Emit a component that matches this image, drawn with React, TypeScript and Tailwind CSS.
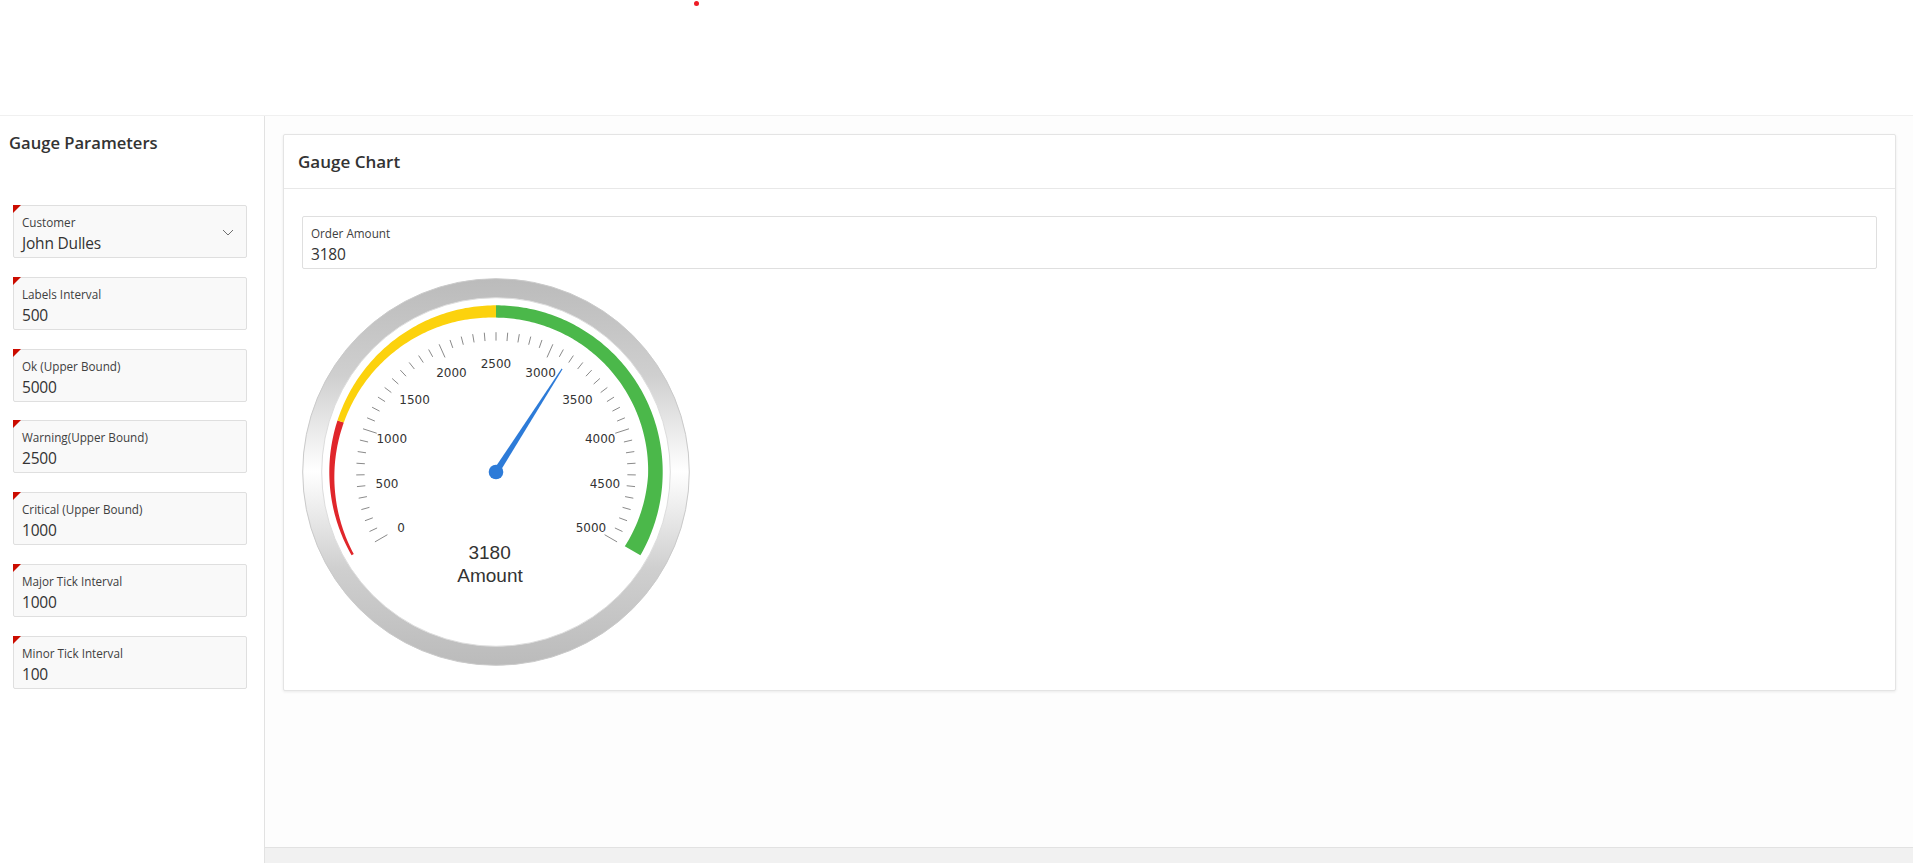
import React from "react";

const CX = 195;
const CY = 195;
const MAX = 5000;

const angle = (value: number) => ((210 - (value / MAX) * 240) * Math.PI) / 180;

const pt = (value: number, r: number) => {
  const a = angle(value);
  return [CX + r * Math.cos(a), CY - r * Math.sin(a)];
};

// range band gets wider along the scale
const bandWidth = (value: number) => {
  const stops = [
    [0, 2.5],
    [1000, 6.7],
    [2500, 12.3],
    [4400, 14.6],
    [5000, 18],
  ];
  for (let i = 1; i < stops.length; i++) {
    if (value <= stops[i][0]) {
      const t = (value - stops[i - 1][0]) / (stops[i][0] - stops[i - 1][0]);
      return stops[i - 1][1] + t * (stops[i][1] - stops[i - 1][1]);
    }
  }
  return 18;
};

const bandPath = (from: number, to: number) => {
  const outer: string[] = [];
  const inner: string[] = [];
  const R = 166.7;
  for (let v = from; v <= to; v += 20) {
    const o = pt(v, R);
    const i = pt(v, R - bandWidth(v));
    outer.push(`${o[0].toFixed(2)} ${o[1].toFixed(2)}`);
    inner.unshift(`${i[0].toFixed(2)} ${i[1].toFixed(2)}`);
  }
  return `M${outer.join("L")}L${inner.join("L")}Z`;
};

const ticks = Array.from({ length: 51 }, (_, i) => i * 100);
const labels = Array.from({ length: 11 }, (_, i) => i * 500);

const Gauge = ({ value }: { value: number }) => {
  const tip = pt(value, 122.5);
  const a = angle(value);
  const nx = Math.sin(a);
  const ny = Math.cos(a);
  const hw = 3.2;
  const tw = 0.55;
  return (
    <svg width="390" height="390" viewBox="0 0 390 390" className="block">
      <defs>
        <linearGradient id="ring" x1="0" y1="0" x2="0" y2="1">
          <stop offset="0" stopColor="#bbbbbb" />
          <stop offset="0.25" stopColor="#cfcfcf" />
          <stop offset="0.5" stopColor="#ffffff" />
          <stop offset="0.75" stopColor="#cfcfcf" />
          <stop offset="1" stopColor="#bbbbbb" />
        </linearGradient>
      </defs>
      <circle cx={CX} cy={CY} r="193.3" fill="url(#ring)" stroke="#cacaca" strokeWidth="1" />
      <circle cx={CX} cy={CY} r="174.3" fill="#ffffff" stroke="#dddddd" strokeWidth="1" />
      <path d={bandPath(0, 1000)} fill="#e0262b" />
      <path d={bandPath(1000, 2500)} fill="#fcd20d" />
      <path d={bandPath(2500, 5000)} fill="#4bb84a" />
      {ticks.map((t) => {
        const major = t % 1000 === 0;
        const p1 = pt(t, 139.8);
        const p2 = pt(t, major ? 125.4 : 131.4);
        return (
          <line
            key={t}
            x1={p1[0]}
            y1={p1[1]}
            x2={p2[0]}
            y2={p2[1]}
            stroke="#8a8a8a"
            strokeWidth="1"
          />
        );
      })}
      {labels.map((l) => {
        const p = pt(l, 109.6);
        return (
          <text
            key={l}
            x={p[0]}
            y={p[1] + 5 + 0.6 * Math.sin(angle(l))}
            textAnchor="middle"
            fill="#333333"
            className="font-['DejaVu_Sans'] text-[12px]"
          >
            {l}
          </text>
        );
      })}
      <path
        d={`M${CX + nx * hw} ${CY + ny * hw}L${tip[0] + nx * tw} ${tip[1] + ny * tw}L${tip[0] - nx * tw} ${tip[1] - ny * tw}L${CX - nx * hw} ${CY - ny * hw}Z`}
        fill="#2d7bd8"
      />
      <circle cx={CX} cy={CY} r="7.3" fill="#2d7bd8" />
      <text
        x={CX - 6.4}
        y={CY + 87.3}
        textAnchor="middle"
        fill="#333333"
        className="font-['Liberation_Sans'] text-[19px]"
      >
        {value}
      </text>
      <text
        x={CX - 6}
        y={CY + 110.3}
        textAnchor="middle"
        fill="#333333"
        className="font-['Liberation_Sans'] text-[19px]"
      >
        Amount
      </text>
    </svg>
  );
};

const Field = ({
  label,
  value,
  required,
  select,
  bg,
}: {
  label: string;
  value: string;
  required?: boolean;
  select?: boolean;
  bg: string;
}) => (
  <div className={`relative h-[53px] border border-[#dfdfdf] rounded-[2px] pl-[8px] pt-[8px] ${bg}`}>
    {required && (
      <span className="absolute left-[-1px] top-[-1px] w-0 h-0 border-t-[8px] border-r-[8px] border-t-[#cb0c00] border-r-transparent" />
    )}
    <div className="text-[11.7px] leading-[16px] text-[#404040]">{label}</div>
    <div className="text-[15.5px] leading-[20px] mt-[3px] tracking-[-0.2px] text-[#333333]">{value}</div>
    {select && (
      <svg
        width="12"
        height="8"
        viewBox="0 0 12 8"
        className="absolute right-[12px] top-[23px]"
        fill="none"
        stroke="#707070"
        strokeWidth="1"
      >
        <path d="M1 1l5 5 5-5" />
      </svg>
    )}
  </div>
);

const params = [
  { label: "Customer", value: "John Dulles", select: true },
  { label: "Labels Interval", value: "500" },
  { label: "Ok (Upper Bound)", value: "5000" },
  { label: "Warning(Upper Bound)", value: "2500" },
  { label: "Critical (Upper Bound)", value: "1000" },
  { label: "Major Tick Interval", value: "1000" },
  { label: "Minor Tick Interval", value: "100" },
];

const App = () => {
  return (
    <div className="h-[863px] flex flex-col bg-white overflow-hidden font-['Open_Sans',sans-serif]">
      <header className="h-[116px] shrink-0 pl-[694px] pt-[1px] border-b border-[#f0f0f0] shadow-[0_1px_3px_rgba(0,0,0,0.04)]">
        <div className="w-[5px] h-[5px] rounded-full bg-[#ee1c25]" />
      </header>
      <div className="flex flex-1 min-h-0">
        <aside className="w-[265px] shrink-0 border-r border-[#e2e2e2] bg-white">
          <h2 className="pl-[9px] pt-[15px] text-[16.6px] leading-[24px] font-semibold text-[#333333]">
            Gauge Parameters
          </h2>
          <div className="flex flex-col gap-[18.83px] pl-[13px] pr-[17px] mt-[50px]">
            {params.map((p) => (
              <Field key={p.label} {...p} required bg="bg-[#f9f9f9]" />
            ))}
          </div>
        </aside>
        <main className="flex-1 flex flex-col bg-[#fdfdfd] min-w-0">
          <div className="flex-1 pl-[18px] pr-[17px] pt-[18px]">
            <section className="h-[557px] bg-white border border-[#e4e4e4] rounded-[2px] shadow-[0_1px_3px_rgba(0,0,0,0.08)]">
              <div className="h-[54px] border-b border-[#e8e8e8] flex items-center pl-[14px]">
                <h3 className="text-[17px] font-semibold text-[#333333]">Gauge Chart</h3>
              </div>
              <div className="pl-[18px] pr-[18px] pt-[27px]">
                <Field label="Order Amount" value="3180" bg="bg-white" />
                <div className="mt-[8px] -ml-[1px]">
                  <Gauge value={3180} />
                </div>
              </div>
            </section>
          </div>
          <footer className="h-[16px] shrink-0 bg-[#f1f1f1] border-t border-[#e2e2e2]" />
        </main>
      </div>
    </div>
  );
};

export default App;
